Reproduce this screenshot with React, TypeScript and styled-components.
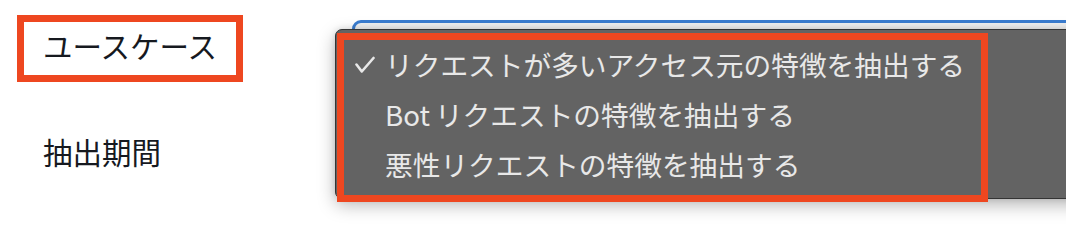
import React from "react";
import styled, { createGlobalStyle } from "styled-components";

const Global = createGlobalStyle`
  html, body { margin: 0; padding: 0; background: #ffffff; }
  body {
    width: 1066px; height: 228px; overflow: hidden;
    font-family: "Noto Sans CJK JP", "Noto Sans", sans-serif;
  }
`;

const ANNOT = "#ee4720";

const Page = styled.div`
  position: relative;
  display: flex;
  width: 1066px;
  height: 228px;
  background: #ffffff;
  overflow: hidden;
`;

const Labels = styled.div`
  display: flex;
  flex-direction: column;
  width: 352px;
  flex: none;
  padding: 15px 0 0 17px;
  box-sizing: border-box;
`;

const Label = styled.div<{ $marked?: boolean; $gap?: number }>`
  box-sizing: border-box;
  width: 226px;
  height: 67px;
  display: flex;
  align-items: center;
  padding-left: ${(p) => (p.$marked ? 19 : 26)}px;
  padding-bottom: ${(p) => (p.$marked ? 6 : 0)}px;
  margin-top: ${(p) => p.$gap ?? 0}px;
  border: ${(p) => (p.$marked ? `7px solid ${ANNOT}` : "none")};
  font-size: 29.5px;
  color: #16191f;
  line-height: 1;
  white-space: nowrap;
`;

const SelectArea = styled.div`
  position: relative;
  flex: 1;
  padding-top: 20px;
`;

const SelectBox = styled.div`
  box-sizing: border-box;
  width: 760px;
  height: 60px;
  border: 3px solid #3b7dd0;
  border-radius: 9px;
  background: #f1f1f1;
`;

const Popup = styled.div`
  position: absolute;
  left: -17px;
  top: 29px;
  width: 760px;
  height: 170px;
  box-sizing: border-box;
  background: #636363;
  border: 1px solid #343434;
  border-radius: 7px;
  box-shadow: 0 6px 18px rgba(0, 0, 0, 0.28), 0 0 6px rgba(0, 0, 0, 0.12);
`;

const OptionList = styled.ul`
  list-style: none;
  box-sizing: border-box;
  margin: 3px 0 0 1px;
  padding: 0;
  width: 651px;
  height: 169px;
  border: 7px solid ${ANNOT};
  display: flex;
  flex-direction: column;
`;

const Option = styled.li`
  display: flex;
  align-items: center;
  height: 50px;
  padding-left: 11px;
  color: #e8e8e8;
  font-size: 27.7px;
  line-height: 1;
  white-space: nowrap;
`;

const Latin = styled.span`
  margin-right: 5px;
`;

const CheckSlot = styled.span`
  display: inline-flex;
  align-items: center;
  width: 30px;
  height: 20px;
  flex: none;
`;

const CheckIcon = () => (
  <svg width="20" height="18" viewBox="0 0 20 18" aria-hidden="true">
    <path
      d="M1.5 8.5 L6.8 15.5 L18.5 2"
      fill="none"
      stroke="#e8e8e8"
      strokeWidth="2.6"
      strokeLinecap="round"
      strokeLinejoin="round"
    />
  </svg>
);

const options = [
  { latin: "", text: "リクエストが多いアクセス元の特徴を抽出する", selected: true },
  { latin: "Bot", text: "リクエストの特徴を抽出する", selected: false },
  { latin: "", text: "悪性リクエストの特徴を抽出する", selected: false },
];

export default function App() {
  return (
    <Page>
      <Global />
      <Labels>
        <Label $marked>ユースケース</Label>
        <Label $gap={36}>抽出期間</Label>
      </Labels>
      <SelectArea>
        <SelectBox />
        <Popup>
          <OptionList>
            {options.map((o) => (
              <Option key={o.latin + o.text}>
                <CheckSlot>{o.selected ? <CheckIcon /> : null}</CheckSlot>
                {o.latin ? <Latin>{o.latin}</Latin> : null}
                {o.text}
              </Option>
            ))}
          </OptionList>
        </Popup>
      </SelectArea>
    </Page>
  );
}
